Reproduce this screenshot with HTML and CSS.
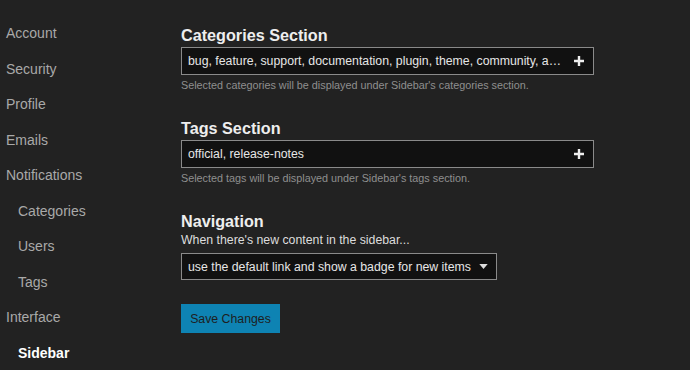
FILE: index.html
```html
<!DOCTYPE html>
<html lang="en">
<head>
  <meta charset="UTF-8">
  <title>Preferences - Sidebar</title>
  <link rel="stylesheet" href="styles.css">
</head>
<body>
  <div class="page">
    <ul class="nav">
      <li>Account</li>
      <li>Security</li>
      <li>Profile</li>
      <li>Emails</li>
      <li>Notifications</li>
      <li class="sub">Categories</li>
      <li class="sub">Users</li>
      <li class="sub">Tags</li>
      <li>Interface</li>
      <li class="sub active">Sidebar</li>
    </ul>

    <div class="content">
      <div class="section">
        <h3>Categories Section</h3>
        <div class="chooser">
          <span class="value">bug, feature, support, documentation, plugin, theme, community, announcements, meta</span>
          <svg class="plus" viewBox="0 0 12 12" width="12" height="12"><path d="M6 1v10M1 6h10" stroke="#eee" stroke-width="2.4"/></svg>
        </div>
        <p class="help">Selected categories will be displayed under Sidebar's categories section.</p>
      </div>

      <div class="section">
        <h3>Tags Section</h3>
        <div class="chooser">
          <span class="value">official, release-notes</span>
          <svg class="plus" viewBox="0 0 12 12" width="12" height="12"><path d="M6 1v10M1 6h10" stroke="#eee" stroke-width="2.4"/></svg>
        </div>
        <p class="help">Selected tags will be displayed under Sidebar's tags section.</p>
      </div>

      <div class="section">
        <h3>Navigation</h3>
        <label class="desc">When there's new content in the sidebar...</label>
        <div class="select">
          <span>use the default link and show a badge for new items</span>
          <svg class="caret" viewBox="0 0 10 6" width="9" height="5"><path d="M0 0h10L5 6z" fill="#ddd"/></svg>
        </div>
      </div>

      <button class="save">Save Changes</button>
    </div>
  </div>
</body>
</html>
```

FILE: styles.css
```css
html, body {
  margin: 0;
  background: #222;
  color: #ddd;
  font-family: "Liberation Sans", Arial, sans-serif;
}
.page {
  display: flex;
  height: 370px;
  overflow: hidden;
}
.nav {
  list-style: none;
  margin: 0;
  padding: 16px 0 0 6px;
  width: 175px;
  box-sizing: border-box;
}
.nav li {
  height: 35.5px;
  line-height: 35.5px;
  font-size: 14px;
  color: #a9a9a9;
}
.nav li.sub {
  padding-left: 12px;
}
.nav li.active {
  color: #fff;
  font-weight: bold;
}
.content {
  padding: 25px 0 0 6px;
}
.section {
  margin-bottom: 27px;
}
.section h3 {
  margin: 0;
  font-size: 16.2px;
  line-height: 20px;
  color: #eee;
}
.chooser {
  display: flex;
  align-items: center;
  width: 413px;
  height: 28px;
  margin-top: 2px;
  box-sizing: border-box;
  border: 1px solid #8a8a8a;
  background: #111;
  padding: 0 8px 0 6px;
}
.chooser .value {
  flex: 1;
  font-size: 12.3px;
  white-space: nowrap;
  overflow: hidden;
  text-overflow: ellipsis;
  color: #e6e6e6;
  padding-right: 10px;
}
.help {
  margin: 4px 0 0;
  font-size: 10.8px;
  color: #8f8f8f;
}
.desc {
  display: block;
  font-size: 12.3px;
  line-height: 18px;
  color: #ddd;
}
.select {
  display: inline-flex;
  align-items: center;
  height: 27px;
  margin-top: 4px;
  box-sizing: border-box;
  border: 1px solid #8a8a8a;
  background: #111;
  padding: 0 8px 0 6px;
  font-size: 12.3px;
  color: #e6e6e6;
}
.select .caret {
  margin-left: 8px;
}
.save {
  display: block;
  margin-top: -3px;
  height: 29px;
  width: 99px;
  padding: 0;
  border: none;
  background: #0e83b3;
  color: #1e1e1e;
  font-family: "Liberation Sans", Arial, sans-serif;
  font-size: 12.3px;
}
```
